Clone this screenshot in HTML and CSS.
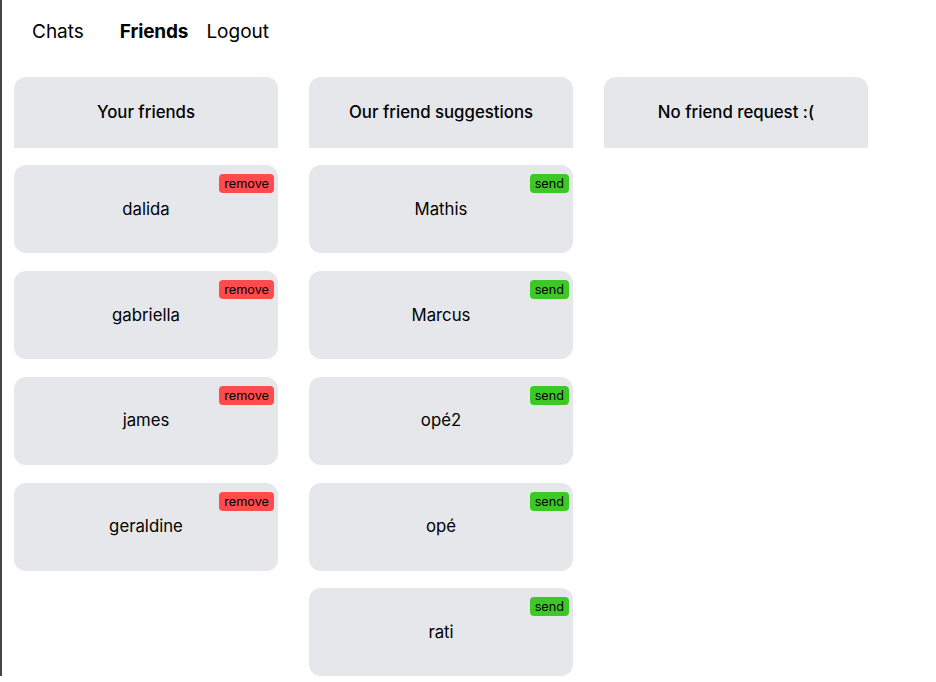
FILE: index.html
```html
<!DOCTYPE html>
<html lang="en">
<head>
<meta charset="utf-8">
<title>Friends</title>
<link rel="stylesheet" href="styles.css">
</head>
<body>
<div class="page">
  <nav class="nav">
    <a class="nav-link nav-chats">Chats</a>
    <a class="nav-link nav-active">Friends</a>
    <a class="nav-link">Logout</a>
  </nav>
  <main class="columns">
    <section class="column">
      <div class="col-header">Your friends</div>
      <div class="card"><span class="name">dalida</span><button class="badge badge-remove">remove</button></div>
      <div class="card"><span class="name">gabriella</span><button class="badge badge-remove">remove</button></div>
      <div class="card"><span class="name">james</span><button class="badge badge-remove">remove</button></div>
      <div class="card"><span class="name">geraldine</span><button class="badge badge-remove">remove</button></div>
    </section>
    <section class="column">
      <div class="col-header">Our friend suggestions</div>
      <div class="card"><span class="name">Mathis</span><button class="badge badge-send">send</button></div>
      <div class="card"><span class="name">Marcus</span><button class="badge badge-send">send</button></div>
      <div class="card"><span class="name">opé2</span><button class="badge badge-send">send</button></div>
      <div class="card"><span class="name">opé</span><button class="badge badge-send">send</button></div>
      <div class="card"><span class="name">rati</span><button class="badge badge-send">send</button></div>
    </section>
    <section class="column">
      <div class="col-header">No friend request :(</div>
    </section>
  </main>
</div>
</body>
</html>
```
FILE: styles.css
```css
html {
  border-left: 2px solid #454545;
  background: #fff;
}
body {
  margin: 0;
  font-family: Inter, "Noto Sans", "Liberation Sans", sans-serif;
  color: #000;
}
.page {
  padding: 0 12px;
}
.nav {
  display: flex;
  align-items: center;
  height: 62px;
  padding-left: 18px;
  gap: 18px;
}
.nav-link {
  font-size: 19px;
  color: #000;
  text-decoration: none;
}
.nav-chats {
  margin-right: 18px;
}
.nav-active {
  font-weight: 700;
  letter-spacing: -0.15px;
}
.columns {
  display: flex;
  align-items: flex-start;
  gap: 31px;
  margin-top: 15px;
}
.column {
  width: 264px;
  display: flex;
  flex-direction: column;
  gap: 17.75px;
}
.col-header {
  height: 70.5px;
  padding-bottom: 1px;
  box-sizing: border-box;
  display: flex;
  align-items: center;
  justify-content: center;
  background: #e5e7eb;
  border-radius: 12px 12px 0 0;
  font-size: 16.8px;
  font-weight: 500;
}
.card {
  position: relative;
  height: 88px;
  padding-bottom: 1px;
  box-sizing: border-box;
  display: flex;
  align-items: center;
  justify-content: center;
  background: #e5e7eb;
  border-radius: 12px;
  font-size: 16.75px;
}
.badge {
  position: absolute;
  top: 9px;
  right: 4px;
  height: 19px;
  padding: 0 5px;
  border: none;
  border-radius: 4px;
  font-family: Inter, "Noto Sans", "Liberation Sans", sans-serif;
  font-size: 12.7px;
  line-height: 19px;
  color: #000;
}
.badge-remove {
  background: #ff4b4b;
}
.badge-send {
  background: #3cc928;
}
```
